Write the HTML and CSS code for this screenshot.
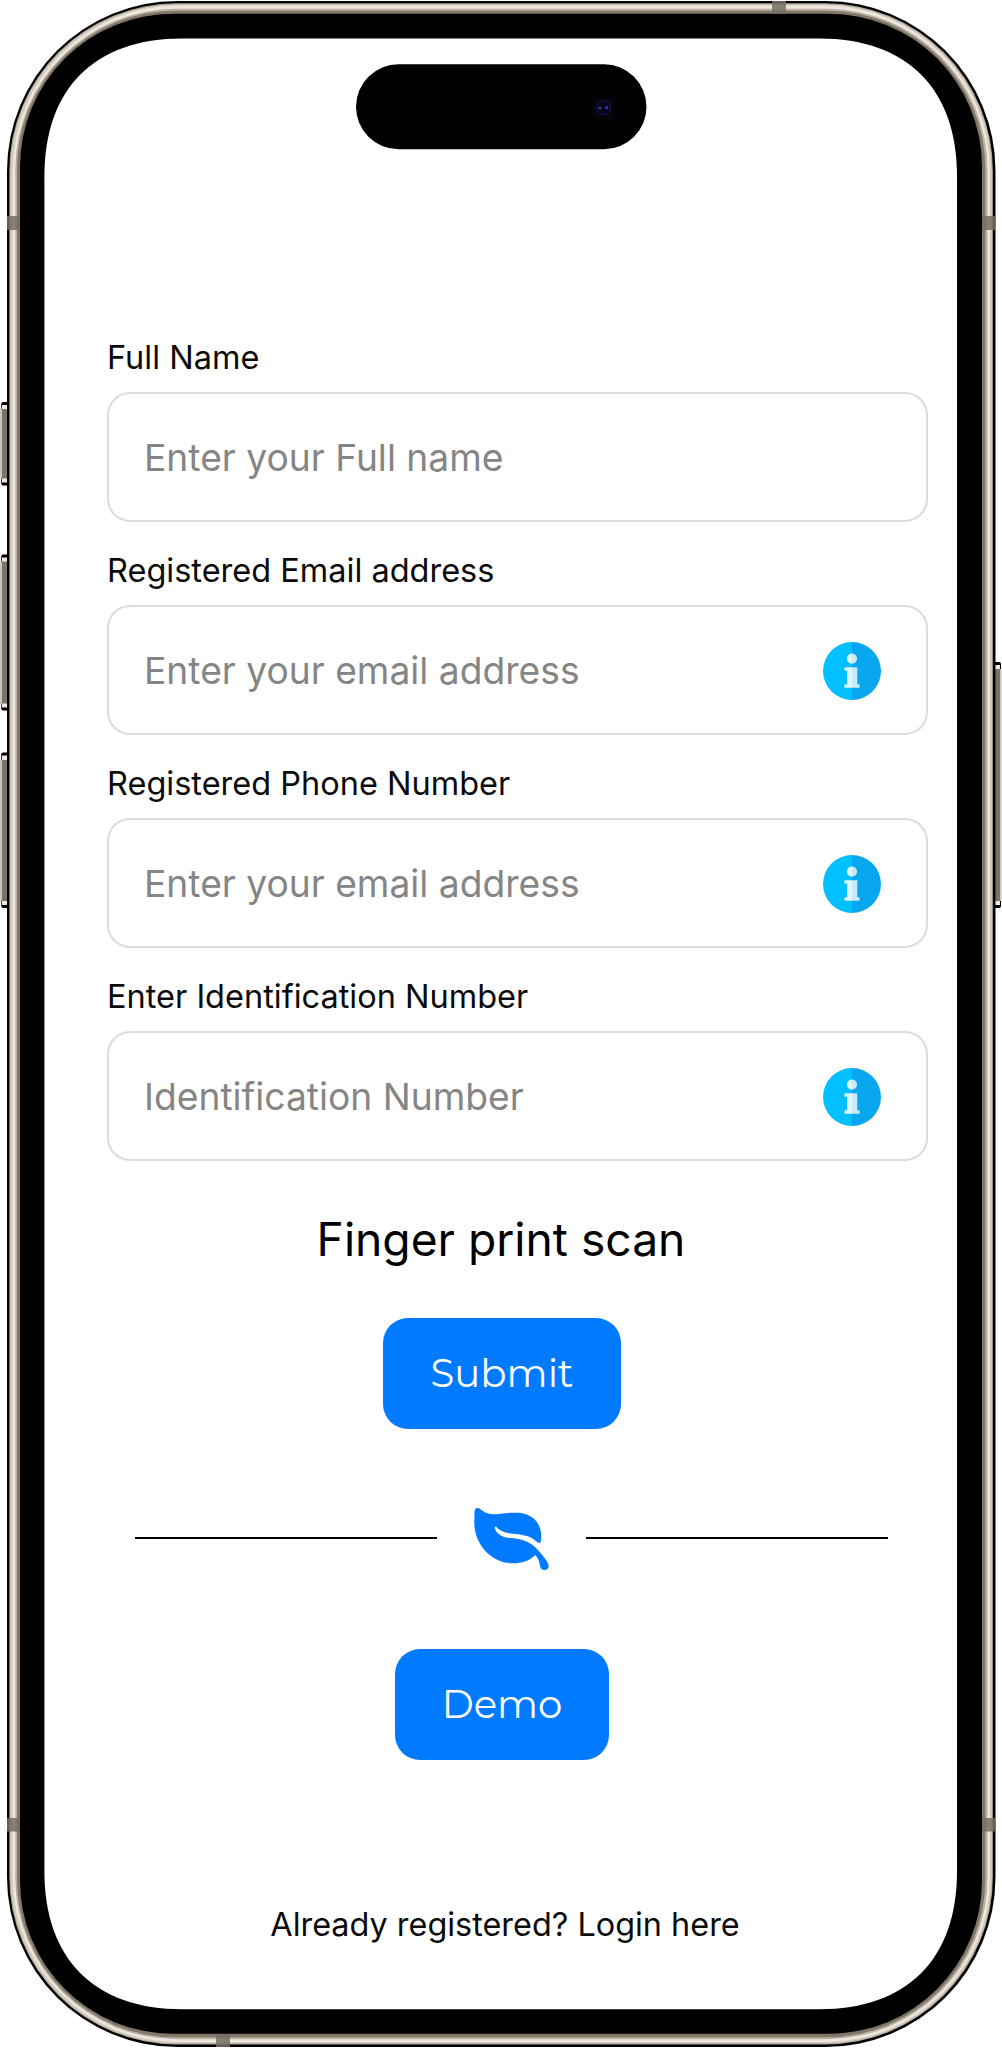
FILE: index.html
```html
<!DOCTYPE html>
<html lang="en">
<head>
<meta charset="utf-8">
<title>Register</title>
<link rel="stylesheet" href="styles.css">
</head>
<body>
<div class="phone">
  <svg class="frame" viewBox="0 0 1002 2048" aria-hidden="true">
    <defs>
      <linearGradient id="key" x1="0" x2="1" y1="0" y2="0">
        <stop offset="0" stop-color="#c9c6c0"/><stop offset=".25" stop-color="#c9c6c0"/>
        <stop offset=".35" stop-color="#7b7466"/><stop offset="1" stop-color="#7b7466"/>
      </linearGradient>
    </defs>
    <!-- side keys -->
    <g fill="#000">
      <rect x="1.2" y="402" width="8" height="83.500" rx="2"/>
      <rect x="1.2" y="554.500" width="8" height="156" rx="2"/>
      <rect x="1.2" y="752.500" width="8" height="155.500" rx="2"/>
      <rect x="992" y="662" width="9" height="246" rx="2"/>
    </g>
    <g fill="#eee8dd">
      <rect x="2" y="405" width="5" height="77.500"/>
      <rect x="2" y="557.500" width="5" height="150"/>
      <rect x="2" y="755.500" width="5" height="149.500"/>
      <rect x="995" y="665" width="5" height="240"/>
    </g>
    <g fill="url(#key)">
      <rect x="0" y="409" width="7" height="69.500"/>
      <rect x="0" y="561.500" width="7" height="142"/>
      <rect x="0" y="760" width="7" height="141"/>
    </g>
    <rect x="995" y="669" width="6" height="232" fill="#7b7466"/>
    <rect x="1000" y="669" width="1.5" height="232" fill="#c9c6c0"/>
    <!-- metal band, from the outer edge inwards -->
    <rect x="7" y="1" width="988.5" height="2046" rx="170" fill="#000"/>
    <rect x="9.3" y="3.3" width="983.6" height="2041.2" rx="167.5" fill="#a79f92"/>
    <rect x="10.3" y="4.3" width="981.6" height="2039.2" rx="166.5" fill="#d5ccc1"/>
    <rect x="12.8" y="5.6" width="977.2" height="2036.4" rx="165" fill="#eee7de"/>
    <rect x="15.3" y="8.8" width="972.2" height="2030.4" rx="161" fill="#b9afa2"/>
    <rect x="17" y="10.8" width="968.3" height="2026.4" rx="158" fill="#81786a"/>
    <rect x="20" y="13.8" width="962" height="2020" rx="153" fill="#000"/>
    <g fill="#777061" fill-opacity=".85">
      <rect x="7" y="216" width="13" height="14"/>
      <rect x="982" y="216" width="13.5" height="14"/>
      <rect x="7" y="1818" width="13" height="13.5"/>
      <rect x="982" y="1818" width="13.5" height="13.5"/>
      <rect x="772" y="1" width="14" height="12.8"/>
      <rect x="216" y="2034" width="14" height="13"/>
    </g>
    <path fill="#fff" d="M44.4 176.400C44.4 88.400 94.400 38.400 182.400 38.400H819C907 38.400 957 88.400 957 176.400V1871.200C957 1959.200 907 2009.200 819 2009.200H182.400C94.400 2009.200 44.4 1959.200 44.4 1871.200Z"/>
    <!-- sensor cutout -->
    <rect x="356" y="64.300" width="290.500" height="85" rx="42.500" fill="#000"/>
    <rect x="592.500" y="95" width="22.500" height="25" rx="4" fill="#060408"/>
    <circle cx="603.500" cy="107.700" r="7" fill="#05051c" stroke="#0e0e3c" stroke-width="1.800"/>
    <circle cx="600" cy="108" r="1.600" fill="#1d4a6b"/>
    <circle cx="606.700" cy="107.500" r="1.700" fill="#3038a0"/>
  </svg>

  <svg class="defs" aria-hidden="true">
    <symbol id="info" viewBox="0 0 58 58">
      <path fill="#00c0ff" d="M29 0A29 29 0 0 0 29 58Z"/>
      <path fill="#08a6ef" d="M29 0A29 29 0 0 1 29 58Z"/>
      <path fill="#e1f6ff" d="M29 11.500A5 5 0 0 0 29 21.700ZM21.500 25.300H29V45.700H21.500V42.300H24.200V28.700H21.500Z"/>
      <path fill="#c9eafb" d="M29 11.500A5 5 0 0 1 29 21.700ZM29 25.300H34.300V42.300H36.600V45.700H29Z"/>
    </symbol>
  </svg>

  <main class="content">
    <form class="form">
      <div class="field">
        <label class="label" for="name">Full Name</label>
        <div class="box"><input class="input" id="name" placeholder="Enter your Full name"></div>
      </div>
      <div class="field">
        <label class="label" for="email">Registered Email address</label>
        <div class="box"><input class="input" id="email" placeholder="Enter your email address"><svg class="info"><use href="#info"/></svg></div>
      </div>
      <div class="field">
        <label class="label" for="phone">Registered Phone Number</label>
        <div class="box"><input class="input" id="phone" placeholder="Enter your email address"><svg class="info"><use href="#info"/></svg></div>
      </div>
      <div class="field">
        <label class="label" for="ident">Enter Identification Number</label>
        <div class="box"><input class="input" id="ident" placeholder="Identification Number"><svg class="info"><use href="#info"/></svg></div>
      </div>
    </form>
    <h1 class="title">Finger print scan</h1>
    <button class="button submit">Submit</button>
    <div class="divider">
      <span class="line"></span>
      <svg class="leaf" viewBox="0 -1 76 64">
        <path fill="#007bff" d="M.5 5Q1-.3 5.200 1.300C8.500 4 12 7.200 20 7.300C30 7.200 35 5 45 5.800C60 7 68 18 67.200 31Q67.100 36 65.500 36Q64 36 60 32.500C55 28.500 47 27.500 37 26.500C28 25.500 24 22 22.500 20Q21 18.800 20.700 20.500C21.300 26 28 30.500 36 31C46 31.500 55 34 61 40C67 46 72 52 74.200 57C76 60 73 63.500 70 63C66 62.500 66 58 64.800 53.500Q63 49.500 61.200 48C54 55 46 56.500 38 56.200C17 56 0 37 .3 15Z"/>
      </svg>
      <span class="line"></span>
    </div>
    <button class="button demo">Demo</button>
    <a class="login">Already registered? Login here</a>
  </main>
</div>
</body>
</html>
```
FILE: styles.css
```css
* { box-sizing: border-box; }

body {
  margin: 0;
  background: #fff;
  font-family: Inter, "Liberation Sans", sans-serif;
  color: #0b0b0b;
}

.phone {
  position: relative;
  width: 1002px;
  height: 2048px;
  overflow: hidden;
}

.frame {
  position: absolute;
  inset: 0;
  width: 1002px;
  height: 2048px;
}

.defs {
  position: absolute;
  width: 0;
  height: 0;
}

.content {
  position: relative;
  display: flex;
  flex-direction: column;
  align-items: center;
  padding-top: 339px;
}

.form {
  display: flex;
  flex-direction: column;
  gap: 30px;
  width: 821px;
  margin-left: 33px;
}

.field {
  display: flex;
  flex-direction: column;
  gap: 15px;
}

.label {
  font-size: 32.5px;
  line-height: 38px;
}

.box {
  display: flex;
  align-items: center;
  height: 130px;
  padding: 2px 45px 0 35px;
  border: 2px solid #dadcdd;
  border-radius: 23px;
}

.input {
  flex: 1;
  min-width: 0;
  padding: 0 0 2px;
  border: 0;
  background: none;
  font-family: inherit;
  font-size: 37.2px;
}

.input::placeholder {
  color: #858585;
  opacity: 1;
}

.info {
  width: 58px;
  height: 58px;
}

.title {
  margin: 50px 0 0;
  font-size: 46.2px;
  font-weight: 400;
  line-height: 56px;
  color: #000;
}

.button {
  display: flex;
  align-items: center;
  justify-content: center;
  height: 111px;
  margin-left: 2px;
  padding: 0;
  border: 0;
  border-radius: 25px;
  background: #007bff;
  color: #fff;
  font-family: Montserrat, Inter, sans-serif;
  font-size: 38.7px;
}

.submit {
  width: 238px;
  margin-top: 51px;
}

.demo {
  width: 214px;
  margin-top: 79px;
}

.divider {
  display: flex;
  align-items: center;
  justify-content: space-between;
  width: 753px;
  margin: 77px 0 0 21px;
}

.line {
  width: 302px;
  height: 2px;
  background: #000;
}

.leaf {
  width: 76px;
  height: 64px;
  overflow: visible;
}

.login {
  margin: 146px 0 0 8px;
  font-size: 32.4px;
  line-height: 38px;
}
```
